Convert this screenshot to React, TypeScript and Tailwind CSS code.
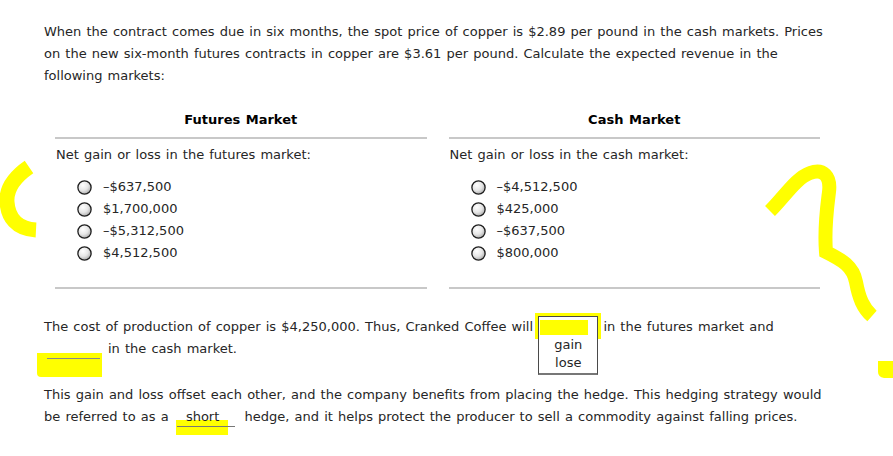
import React from 'react';

const futures = ['–$637,500', '$1,700,000', '–$5,312,500', '$4,512,500'];
const cash = ['–$4,512,500', '$425,000', '–$637,500', '$800,000'];

function Radio() {
  return (
    <svg width="15" height="15" viewBox="0 0 15 15" className="shrink-0">
      <defs>
        <radialGradient id="rg" cx="0.38" cy="0.32" r="0.8">
          <stop offset="0" stopColor="#ffffff" />
          <stop offset="0.5" stopColor="#e6e6e6" />
          <stop offset="1" stopColor="#9a9a9a" />
        </radialGradient>
      </defs>
      <circle cx="7.5" cy="7.5" r="6.6" fill="url(#rg)" stroke="#1e1e1e" strokeWidth="1.3" />
    </svg>
  );
}

function Column({ title, label, options }: { title: string; label: string; options: string[] }) {
  return (
    <div className="flex flex-col">
      <div className="text-center font-bold text-black leading-[22px]">{title}</div>
      <div className="mt-[6px] h-[2px] bg-[#c8c8c8]" />
      <div className="mt-[5px] pl-[1px] leading-[22px]">{label}</div>
      <div className="mt-[10px] flex flex-col pl-[22px]">
        {options.map((o) => (
          <label key={o} className="flex items-center gap-[11px] h-[22px]">
            <Radio />
            <span>{o}</span>
          </label>
        ))}
      </div>
      <div className="mt-[23px] h-[2px] bg-[#c8c8c8]" />
    </div>
  );
}

export default function App() {
  return (
    <div className="relative w-[893px] h-[456px] bg-white overflow-hidden text-[13px] text-[#262626] [word-spacing:1px] font-['DejaVu_Sans',Verdana,sans-serif]">
      <div className="pt-[21px] pl-[44px] leading-[22px]">
        <p>
          <span className="block whitespace-nowrap">
            When the contract comes due in six months, the spot price of copper is $2.89 per pound in the cash markets. Prices
          </span>
          <span className="block whitespace-nowrap">
            on the new six-month futures contracts in copper are $3.61 per pound. Calculate the expected revenue in the
          </span>
          <span className="block whitespace-nowrap">following markets:</span>
        </p>
      </div>

      <div className="mt-[22px] ml-[55px] w-[765px] grid grid-cols-2 gap-[22px]">
        <Column title="Futures Market" label="Net gain or loss in the futures market:" options={futures} />
        <Column title="Cash Market" label="Net gain or loss in the cash market:" options={cash} />
      </div>

      <div className="mt-[27px] pl-[44px] leading-[22px]">
        <p>
          <span className="block whitespace-nowrap">
            The cost of production of copper is $4,250,000. Thus, Cranked Coffee will{' '}
            <span className="relative inline-block align-middle w-[60px] h-[20px] -mt-[3px] border border-[#4a4a4a] outline-[3px] outline-[#ffff00] bg-white">
              <span className="absolute left-[1px] top-[3px] w-[48px] h-[15px] bg-[#ffff00]" />
              <span className="absolute left-[-1px] top-full w-[60px] h-[40px] border border-t-0 border-[#4a4a4a] border-b-2 border-b-[#777] bg-white flex flex-col items-center leading-[18px] pt-[1px] z-10">
                <span>gain</span>
                <span>lose</span>
              </span>
            </span>{' '}
            in the futures market and
          </span>
          <span className="flex items-center whitespace-nowrap">
            <span className="relative block shrink-0 w-[53px] h-[22px] ml-[3px]">
              <span className="absolute left-[-10px] top-[15px] w-[65px] h-[24px] bg-[#ffff00] rounded-bl-[4px]" />
              <span className="absolute left-0 top-[20px] w-[53px] h-px bg-[#8a8a8a]" />
            </span>
            <span className="ml-[8px]">in the cash market.</span>
          </span>
        </p>
      </div>

      <div className="mt-[24px] pl-[44px] leading-[22px]">
        <p>
          <span className="block whitespace-nowrap">
            This gain and loss offset each other, and the company benefits from placing the hedge. This hedging strategy would
          </span>
          <span className="flex items-center whitespace-nowrap">
            <span>be referred to as a</span>
            <span className="relative flex shrink-0 justify-center w-[58px] h-[22px] ml-[8px]">
              <span className="absolute left-[-1px] top-[14px] w-[52px] h-[15px] bg-[#ffff00]" />
              <span className="absolute left-0 top-[20px] w-[58px] h-px bg-[#777]" />
              <span className="relative pr-[6px]">short</span>
            </span>
            <span className="ml-[10px]">hedge, and it helps protect the producer to sell a commodity against falling prices.</span>
          </span>
        </p>
      </div>

      <svg className="absolute inset-0 pointer-events-none" width="893" height="456" viewBox="0 0 893 456">
        <path
          d="M29 167 C 16 176, 6 187, 7 202 C 8 217, 16 229, 36 230"
          fill="none"
          stroke="#ffff00"
          strokeWidth="15"
        />
        <path
          d="M770 211 C 785 196, 796 178, 810 173 C 823 168, 831 176, 829 192 C 827 208, 824 228, 826 252 C 842 260, 853 266, 856 282 C 859 298, 863 308, 872 316"
          fill="none"
          stroke="#ffff00"
          strokeWidth="14"
        />
        <path d="M878 361 H893 V378 H884 Q878 377 878 372 Z" fill="#ffff00" />
      </svg>
    </div>
  );
}
